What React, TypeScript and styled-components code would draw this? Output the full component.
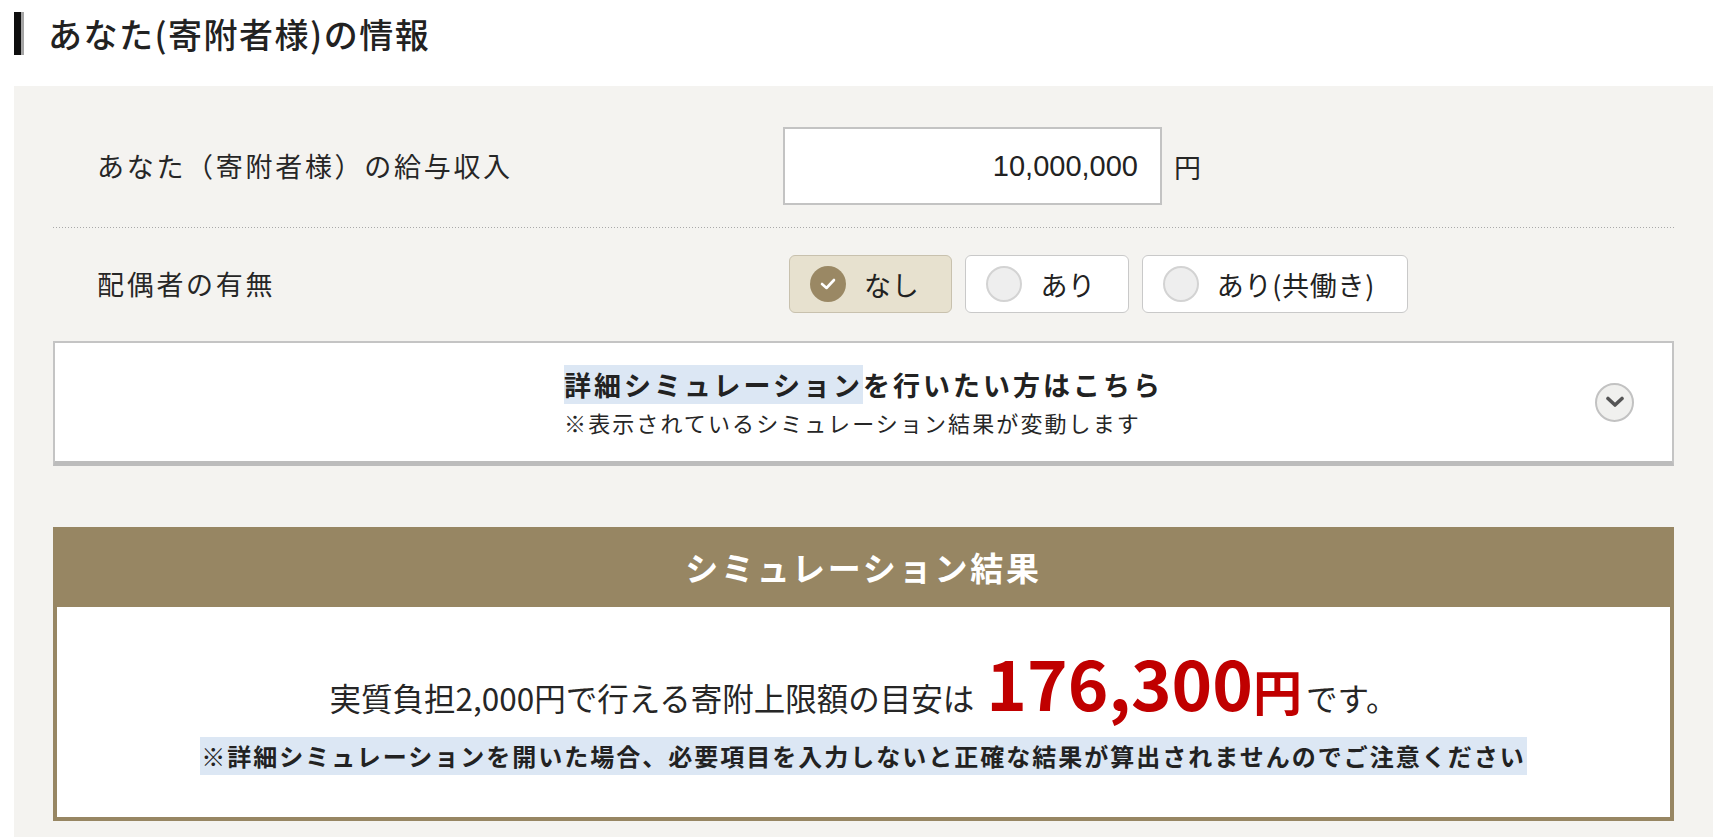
import styled, { createGlobalStyle } from 'styled-components';

const GlobalStyle = createGlobalStyle`
  html, body {
    margin: 0;
    padding: 0;
    background: #ffffff;
  }
  body {
    font-family: 'Noto Sans CJK JP', 'Noto Sans', sans-serif;
    color: #2b2b2b;
  }
`;

type checkedType = {
  $checked?: boolean;
};

const spouseOptions = [
  { label: 'なし', checked: true },
  { label: 'あり', checked: false },
  { label: 'あり(共働き)', checked: false },
];

export default function App() {
  return (
    <Page>
      <GlobalStyle />
      <Heading>
        <HeadingBar />
        あなた(寄附者様)の情報
      </Heading>

      <Panel>
        <FormRow>
          <Label>あなた（寄附者様）の給与収入</Label>
          <Control>
            <AmountInput defaultValue="10,000,000" readOnly />
            <Yen>円</Yen>
          </Control>
        </FormRow>
        <Divider />
        <FormRow $compact>
          <Label>配偶者の有無</Label>
          <RadioGroup>
            {spouseOptions.map((opt) => (
              <RadioOption key={opt.label} $checked={opt.checked}>
                <RadioDot $checked={opt.checked}>
                  {opt.checked && (
                    <svg width="16" height="12" viewBox="0 0 16 12">
                      <polyline
                        points="2,6 6.5,10 14,2"
                        fill="none"
                        stroke="#ffffff"
                        strokeWidth="2.6"
                        strokeLinecap="round"
                        strokeLinejoin="round"
                      />
                    </svg>
                  )}
                </RadioDot>
                {opt.label}
              </RadioOption>
            ))}
          </RadioGroup>
        </FormRow>

        <DetailBox>
          <DetailText>
            <DetailTitle>
              <Marked>詳細シミュレーション</Marked>を行いたい方はこちら
            </DetailTitle>
            <DetailSub>※表示されているシミュレーション結果が変動します</DetailSub>
          </DetailText>
          <ToggleCircle>
            <svg width="20" height="12" viewBox="0 0 20 12">
              <path
                d="M3 2.5 L10 9 L17 2.5"
                fill="none"
                stroke="#555555"
                strokeWidth="3.6"
                strokeLinecap="round"
                strokeLinejoin="round"
              />
            </svg>
          </ToggleCircle>
        </DetailBox>

        <Result>
          <ResultHeader>シミュレーション結果</ResultHeader>
          <ResultBody>
            <Sentence>
              実質負担2,000円で行える寄附上限額の目安は
              <Amount>176,300</Amount>
              <AmountUnit>円</AmountUnit>
              <Tail>です。</Tail>
            </Sentence>
            <Note>
              ※詳細シミュレーションを開いた場合、必要項目を入力しないと正確な結果が算出されませんのでご注意ください
            </Note>
          </ResultBody>
        </Result>
      </Panel>
    </Page>
  );
}

const Page = styled.div`
  padding: 12px 13px 0 14px;
`;

const Heading = styled.h2`
  display: flex;
  align-items: center;
  gap: 24px;
  height: 43px;
  margin: 0;
  font-size: 34px;
  font-weight: 500;
  letter-spacing: 1.5px;
  line-height: 43px;
  color: #222222;
`;

const HeadingBar = styled.span`
  align-self: stretch;
  width: 7px;
  background: #0e0e0e;
  border-right: 3px solid #a5a5a5;
`;

const Panel = styled.section`
  margin-top: 31px;
  background: #f4f3f0;
  padding: 19px 39px 30px;
`;

const FormRow = styled.div<{ $compact?: boolean }>`
  display: grid;
  grid-template-columns: 730px 1fr;
  align-items: center;
  padding: ${(props) => (props.$compact ? '27px 0 0' : '22px 0')};
`;

const Divider = styled.div`
  height: 1px;
  background: repeating-linear-gradient(to right, #a9a9a9 0 1px, transparent 1px 3px);
`;

const Label = styled.div`
  padding-left: 44px;
  font-size: 27px;
  letter-spacing: 2.7px;
  line-height: 1.4;
  color: #262626;
`;

const Control = styled.div`
  display: flex;
  align-items: center;
`;

const AmountInput = styled.input`
  box-sizing: border-box;
  width: 379px;
  height: 78px;
  padding: 0 22px;
  border: 2px solid #c3c3c3;
  border-radius: 0;
  background: #ffffff;
  text-align: right;
  font-family: 'Liberation Sans', Arial, sans-serif;
  font-size: 29px;
  color: #222222;
  outline: none;
`;

const Yen = styled.span`
  margin-left: 12px;
  font-size: 27px;
  color: #262626;
`;

const RadioGroup = styled.div`
  display: flex;
  gap: 13px;
  padding-left: 6px;
`;

const RadioOption = styled.div<checkedType>`
  display: flex;
  align-items: center;
  box-sizing: border-box;
  height: 58px;
  padding: 0 32px 0 20px;
  border: 1.5px solid ${(props) => (props.$checked ? '#c8c1ae' : '#c9c9c9')};
  border-radius: 6px;
  background: ${(props) => (props.$checked ? '#e7e1cf' : '#ffffff')};
  font-size: 27px;
  letter-spacing: 0.7px;
  color: #222222;
`;

const RadioDot = styled.span<checkedType>`
  display: flex;
  align-items: center;
  justify-content: center;
  box-sizing: border-box;
  width: 36px;
  height: 36px;
  margin-right: 18px;
  border-radius: 50%;
  background: ${(props) => (props.$checked ? '#9a8864' : '#eeeeee')};
  border: ${(props) => (props.$checked ? 'none' : '2px solid #d3d3d3')};
`;

const DetailBox = styled.div`
  display: grid;
  grid-template-columns: 1fr auto 1fr;
  align-items: center;
  margin-top: 28px;
  padding: 22px 0;
  background: #ffffff;
  border: 2px solid #c4c4c4;
  border-bottom: 5px solid #bcbcbc;
`;

const DetailText = styled.div`
  grid-column: 2;
  text-align: left;
`;

const DetailTitle = styled.div`
  font-size: 27px;
  font-weight: 700;
  letter-spacing: 3px;
  line-height: 40px;
  color: #222222;
`;

const Marked = styled.span`
  background: #dce7f4;
`;

const DetailSub = styled.div`
  font-size: 22px;
  letter-spacing: 2.1px;
  line-height: 34px;
  color: #262626;
`;

const ToggleCircle = styled.span`
  grid-column: 3;
  justify-self: end;
  display: flex;
  align-items: center;
  justify-content: center;
  box-sizing: border-box;
  width: 39px;
  height: 39px;
  margin-right: 38px;
  border-radius: 50%;
  background: #f0f0ee;
  border: 2px solid #c2c2c2;
`;

const Result = styled.div`
  margin-top: 61px;
`;

const ResultHeader = styled.div`
  background: #978663;
  color: #ffffff;
  text-align: center;
  font-size: 33px;
  font-weight: 700;
  letter-spacing: 2.8px;
  line-height: 80px;
`;

const ResultBody = styled.div`
  padding: 40px 0 42px;
  background: #ffffff;
  border: 4px solid #978663;
  border-top: none;
  text-align: center;
`;

const Sentence = styled.div`
  display: flex;
  justify-content: center;
  align-items: baseline;
  font-size: 31.5px;
  line-height: 1.45;
  color: #262626;
`;

const Amount = styled.span`
  margin-left: 12px;
  font-size: 69px;
  font-weight: 700;
  line-height: 1;
  color: #c00000;
`;

const AmountUnit = styled.span`
  font-size: 49px;
  font-weight: 700;
  line-height: 1;
  color: #c00000;
`;

const Tail = styled.span`
  margin-left: 4px;
`;

const Note = styled.span`
  display: inline-block;
  margin-top: 16px;
  padding: 0 1px;
  background: #dce7f4;
  font-size: 24px;
  font-weight: 700;
  letter-spacing: 2px;
  line-height: 38px;
  color: #222222;
`;
